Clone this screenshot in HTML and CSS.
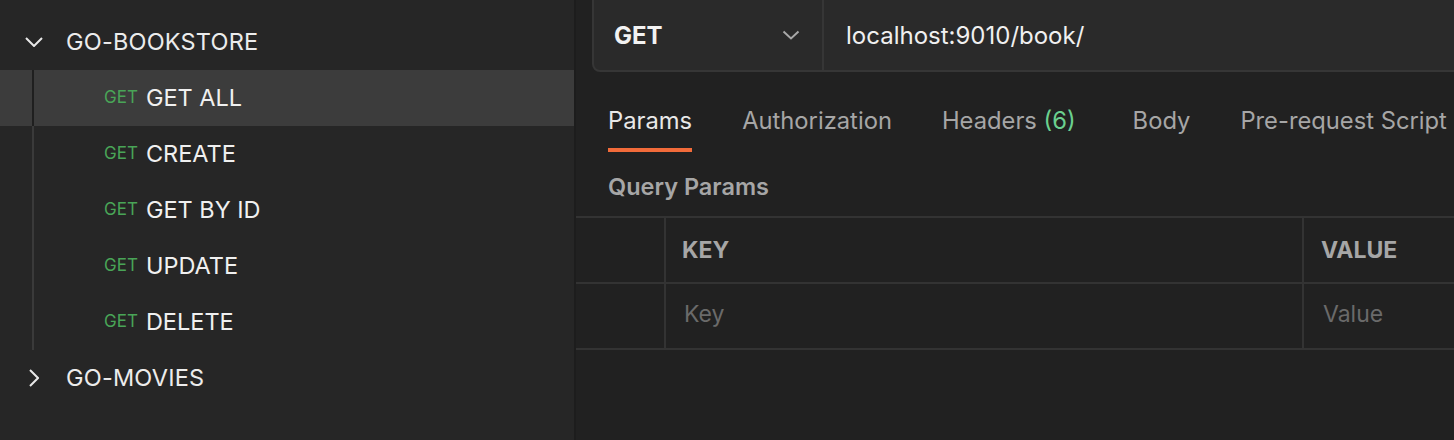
FILE: index.html
```html
<!DOCTYPE html>
<html>
<head>
<meta charset="utf-8">
<link rel="stylesheet" href="styles.css">
</head>
<body>
<div class="app">
  <aside class="sidebar">
    <div class="folder">
      <span class="chev down"><svg width="18" height="10" viewBox="0 0 18 10"><path d="M1 1 L9 9 L17 1" fill="none" stroke="#e8e8e8" stroke-width="2"/></svg></span>
      <span class="fname">GO-BOOKSTORE</span>
    </div>
    <div class="children">
      <div class="req selected"><span class="method">GET</span><span class="rname">GET ALL</span></div>
      <div class="req"><span class="method">GET</span><span class="rname">CREATE</span></div>
      <div class="req"><span class="method">GET</span><span class="rname">GET BY ID</span></div>
      <div class="req"><span class="method">GET</span><span class="rname">UPDATE</span></div>
      <div class="req"><span class="method">GET</span><span class="rname">DELETE</span></div>
    </div>
    <div class="folder">
      <span class="chev right"><svg width="10" height="18" viewBox="0 0 10 18"><path d="M1 1 L9 9 L1 17" fill="none" stroke="#e8e8e8" stroke-width="2"/></svg></span>
      <span class="fname">GO-MOVIES</span>
    </div>
  </aside>
  <main class="main">
    <div class="urlbar">
      <div class="methodsel"><span class="mtext">GET</span><svg class="mchev" width="18" height="10" viewBox="0 0 18 10"><path d="M1.5 1.5 L9 8.5 L16.5 1.5" fill="none" stroke="#a8a8a8" stroke-width="2"/></svg></div>
      <div class="url">localhost:9010/book/</div>
    </div>
    <nav class="tabs">
      <span class="tab active">Params</span>
      <span class="tab">Authorization</span>
      <span class="tab headers">Headers <span class="count">(6)</span></span>
      <span class="tab">Body</span>
      <span class="tab">Pre-request Script</span>
    </nav>
    <div class="qp">Query Params</div>
    <div class="table">
      <div class="trow">
        <div class="cell c0"></div>
        <div class="cell c1 th">KEY</div>
        <div class="cell c2 th">VALUE</div>
      </div>
      <div class="trow">
        <div class="cell c0"></div>
        <div class="cell c1 ph">Key</div>
        <div class="cell c2 ph">Value</div>
      </div>
    </div>
  </main>
</div>
</body>
</html>
```

FILE: styles.css
```css
* { box-sizing: border-box; }
html, body { margin: 0; padding: 0; }
body {
  width: 1454px;
  height: 440px;
  overflow: hidden;
  background: #212121;
  font-family: Inter, "Noto Sans", sans-serif;
  color: #ececec;
}
.app { display: flex; height: 440px; }
.sidebar {
  width: 576px;
  flex: none;
  background: #262626;
  border-right: 2px solid #1d1d1d;
  padding-top: 14px;
}
.folder {
  height: 56px;
  display: flex;
  align-items: center;
  padding-bottom: 2px;
  font-size: 23.5px;
  color: #ececec;
}
.chev {
  width: 66px;
  flex: none;
  display: flex;
  align-items: center;
  padding-top: 2px;
}
.chev.down { padding-left: 25px; }
.chev.right { padding-left: 29px; }
.fname { letter-spacing: 0.2px; }
.req {
  position: relative;
  height: 56px;
  display: flex;
  align-items: center;
  padding-left: 104px;
  padding-bottom: 2px;
}
.req::before {
  content: "";
  position: absolute;
  left: 32px; top: 0; bottom: 0;
  width: 2px;
  background: #3a3a3a;
}
.req.selected { background: #3c3c3c; }
.req.selected::before { background: #1f1f1f; }
.method {
  color: #49a457;
  font-size: 17px;
  margin-right: 8px;
}
.rname { font-size: 23.5px; color: #f0f0f0; }

.main { flex: 1; min-width: 0; }
.urlbar {
  margin-top: -10px;
  margin-left: 16px;
  height: 82px;
  width: 900px;
  background: #2a2a2a;
  border: 2px solid #363636;
  border-radius: 8px;
  display: flex;
  align-items: stretch;
}
.methodsel {
  width: 230px;
  flex: none;
  border-right: 2px solid #363636;
  display: flex;
  align-items: center;
  justify-content: space-between;
  padding: 8px 22px 0 20px;
}
.mtext { font-weight: 700; font-size: 24px; color: #f2f2f2; }
.url { display: flex; align-items: center; padding: 8px 0 0 22px; font-size: 24px; color: #f0f0f0; }

.tabs {
  display: flex;
  gap: 50px;
  padding-left: 32px;
  margin-top: 22px;
  height: 58px;
}
.tab {
  font-size: 23.75px;
  color: #a6a6a6;
  height: 58px;
  padding-top: 12px;
  border-bottom: 4px solid transparent;
  white-space: nowrap;
}
.tab.active { color: #e8e8e8; border-bottom-color: #f26b3a; }
.tab.headers { margin-right: 7px; }
.count { color: #6bd08f; }
.qp {
  padding-left: 32px;
  padding-top: 20px;
  font-size: 23.5px;
  font-weight: 600;
  color: #a6a6a6;
  height: 64px;
}
.table { border-top: 2px solid #333; }
.trow { display: flex; height: 66px; border-bottom: 2px solid #333; }
.cell { display: flex; align-items: center; }
.c0 { width: 90px; border-right: 2px solid #333; flex: none; }
.c1 { width: 638px; border-right: 2px solid #333; flex: none; padding-left: 16px; }
.c2 { flex: 1; padding-left: 17px; }
.c1.ph { padding-left: 18px; }
.c2.ph { padding-left: 19px; }
.ph { padding-bottom: 4px; }
.th { font-weight: 700; font-size: 23px; color: #a6a6a6; }
.ph { font-size: 23px; color: #6a6a6a; }
```
